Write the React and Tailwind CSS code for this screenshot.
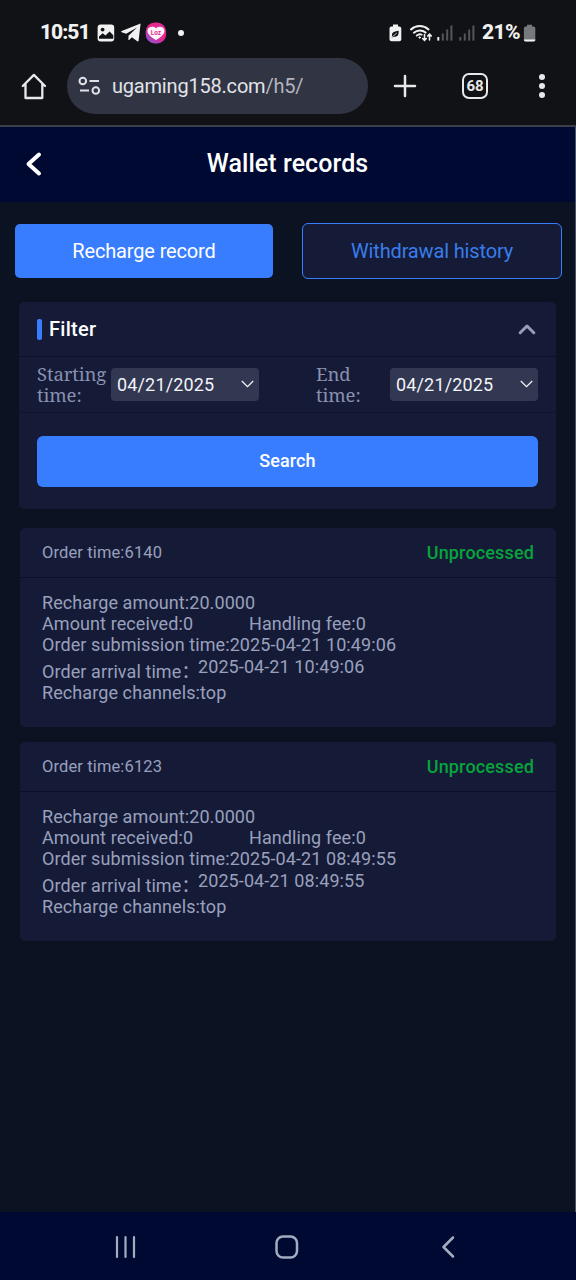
import React from "react";

const orders = [
  { id: "6140", time: "2025-04-21 10:49:06" },
  { id: "6123", time: "2025-04-21 08:49:55" },
];

function Signal({ first }) {
  return (
    <svg className="h-[16px] w-[16px]" viewBox="0 0 16 16">
      <rect x="0.3" y="12" width="2" height="3.6" fill={first ? "#eeeeee" : "#55565a"} />
      <rect x="4.8" y="8.5" width="2" height="7.1" fill="#55565a" />
      <rect x="9.2" y="4.5" width="2" height="11.1" fill="#55565a" />
      <rect x="13.4" y="0.5" width="2" height="15.1" fill="#55565a" />
    </svg>
  );
}

function StatusBar() {
  return (
    <div className="flex h-[58px] items-center pt-[7px] text-[#f1f1f1]">
      <span className="ml-[40px] w-[57px] whitespace-nowrap text-[21px] font-extrabold leading-none tracking-[-1px]">10:51</span>
      <svg className="h-[18px] w-[18px]" viewBox="0 0 18 18">
        <rect x="0.6" y="0.6" width="16.6" height="16.8" rx="3" fill="#f1f1f1" />
        <circle cx="5.6" cy="5.6" r="1.9" fill="#111216" />
        <path d="M2 14.8v-2.3l3.7-3.2 2.7 2.3 4.2-4 3.7 3.6v3.6z" fill="#111216" />
      </svg>
      <svg className="ml-[6px] h-[19px] w-[20px]" viewBox="0 0 20 19">
        <path d="M19.6.5 17.6 17.8c-.1.7-.8.9-1.3.5l-5.400-4-2.700 2.600c-.4.4-.8.2-.8-.4l.1-3.800L16 4.600 5.200 10.700.7 9.200c-.8-.3-.8-1 0-1.300z" fill="#f1f1f1" />
      </svg>
      <svg className="ml-[4px] h-[22px] w-[22px]" viewBox="0 0 22 22">
        <defs>
          <linearGradient id="badge" x1="1" y1="0" x2="0.2" y2="1">
            <stop offset="0" stopColor="#d52d9a" />
            <stop offset=".5" stopColor="#ec258a" />
            <stop offset="1" stopColor="#9152cf" />
          </linearGradient>
        </defs>
        <rect x=".7" y=".6" width="20.4" height="20.8" rx="9" fill="url(#badge)" />
        <path d="M11 17.9C6.5 15.5 2.500 12.100 2.500 8.900c0-4 5.500-5.400 8.500-2.500 3-2.900 8.500-1.500 8.500 2.500 0 3.200-4 6.600-8.500 9z" fill="#fff4fa" />
        <text x="11" y="13.100" textAnchor="middle" fontSize="6.400" fontWeight="700" fill="#dc2d91">Loz</text>
      </svg>
      <span className="ml-[11px] size-[6px] rounded-full bg-[#f1f1f1]" />
      <svg className="ml-[205px] h-[18px] w-[13px]" viewBox="0 0 13 18">
        <path d="M4 .5h5v2h1.3c1.2 0 2 .8 2 2v10.8c0 1.2-.8 2-2 2H2.5c-1.2 0-2-.8-2-2V4.500c0-1.200.8-2 2-2H4z" fill="#f1f1f1" />
        <path d="M9.600 6.800C5.500 7.300 3 8.500 3 11c0 .5.100.8.300 1.100L2.500 13.400l3-.7c3.500.3 4.400-2.500 4.100-5.900z" fill="#111216" />
        <path d="M3 13.200 7.800 9" stroke="#f1f1f1" strokeWidth=".8" />
      </svg>
      <svg className="ml-[8px] h-[18px] w-[23px]" viewBox="0 0 23 18" fill="none" stroke="#f1f1f1" strokeLinecap="round">
        <path d="M1 5.400a13 13 0 0 1 17.500 0" strokeWidth="2" />
        <path d="M3.900 8.700a9 9 0 0 1 11.700-.1" strokeWidth="2" />
        <path d="M6.700 11.600a5 5 0 0 1 5-1" strokeWidth="1.800" />
        <circle cx="9.700" cy="13.500" r=".8" fill="#f1f1f1" />
        <path d="M14.500 10.500v5.800m-1.800-1.800 1.800 1.900 1.800-1.900M19.500 16v-5.800m-1.800 1.800 1.800-1.900 1.800 1.900" strokeWidth="1.600" />
      </svg>
      <span className="ml-[4px] flex gap-[6px]">
        <Signal first />
        <Signal />
      </span>
      <span className="ml-[7px] w-[41px] whitespace-nowrap text-[21px] font-extrabold leading-none tracking-[-0.600px]">21%</span>
      <svg className="h-[18px] w-[13px]" viewBox="0 0 13 18">
        <path d="M4 .8h5v1.700h1.500c1 0 1.800.8 1.800 1.800v13H.9v-13c0-1 .8-1.800 1.800-1.800H4z" fill="#77787b" />
        <path d="M.9 15.600h11.400c0 1.100-.7 1.800-1.800 1.800H2.700c-1.100 0-1.800-.7-1.800-1.800z" fill="#f1f1f1" />
      </svg>
    </div>
  );
}

function BrowserBar() {
  return (
    <div className="flex h-[56px] items-center">
      <svg className="ml-[21px] h-[28px] w-[26px]" viewBox="0 0 26 28" fill="none" stroke="#e8e8ea" strokeWidth="2.300" strokeLinejoin="round" strokeLinecap="round">
        <path d="M1.800 14 12.900 2.900 24 14M4.500 12v14h16.800V12" />
      </svg>
      <div className="ml-[20px] flex h-[56px] w-[301px] items-center rounded-full bg-[#313543]">
        <svg className="ml-[11px] h-[20px] w-[24px]" viewBox="0 0 24 20" fill="none" stroke="#dfe1e8" strokeWidth="2">
          <circle cx="4.800" cy="5" r="3.300" />
          <path d="M11.500 5H21M2 14.500h9" />
          <circle cx="17.800" cy="14.500" r="3.300" />
        </svg>
        <span className="ml-[10px] whitespace-nowrap text-[20px] tracking-[-0.200px] text-[#e2e3e9]">
          ugaming158.com<span className="text-[#b1b4bf]">/h5/</span>
        </span>
      </div>
      <svg className="ml-[25px] size-[24px]" viewBox="0 0 24 24" stroke="#e8e8ea" strokeWidth="2.500" strokeLinecap="round">
        <path d="M12 2v20M2 12h20" />
      </svg>
      <div className="ml-[45px] flex h-[26px] w-[26px] items-center justify-center rounded-[7px] border-[2.500px] border-[#e8e8ea] text-[15px] font-bold leading-none text-[#e8e8ea]">68</div>
      <div className="ml-[51px] flex flex-col gap-[3px]">
        <span className="size-[6px] rounded-full bg-[#e8e8ea]" />
        <span className="size-[6px] rounded-full bg-[#e8e8ea]" />
        <span className="size-[6px] rounded-full bg-[#e8e8ea]" />
      </div>
    </div>
  );
}

function DateField({ label }) {
  return (
    <div className="flex items-center">
      <div className="w-[74px] font-['Noto_Serif','DejaVu_Serif_Condensed','DejaVu_Serif',serif] text-[18.500px] leading-[21px] tracking-[-0.100px] text-[#8990b0]">
        {label}
        <br />
        time:
      </div>
      <div className="flex h-[33px] w-[148px] items-center justify-between rounded-[4px] bg-[#323752] pl-[6px] pr-[5px] text-[18px] tracking-[0.150px] text-[#f2f3f8]">
        <span>04/21/2025</span>
        <svg className="h-[8px] w-[13px]" viewBox="0 0 13 8" fill="none" stroke="#f2f3f8" strokeWidth="1.300">
          <path d="m.8 1 5.700 5.700L12.200 1" />
        </svg>
      </div>
    </div>
  );
}

function FilterPanel() {
  return (
    <section className="ml-[19px] mt-[22px] h-[207px] w-[537px] rounded-[5px] bg-[#151b37]">
      <div className="flex h-[55px] items-center border-b border-[#0c122d] pl-[18px] pr-[20px]">
        <span className="h-[21px] w-[5px] rounded-[2px] bg-[#397dff]" />
        <h2 className="ml-[7px] text-[20px] font-medium leading-none tracking-[0.300px] text-white">Filter</h2>
        <svg className="ml-auto h-[11px] w-[18px]" viewBox="0 0 18 11" fill="none" stroke="#979db9" strokeWidth="3" strokeLinecap="round" strokeLinejoin="round">
          <path d="M2.200 8.800 9 2l6.800 6.800" />
        </svg>
      </div>
      <div className="flex h-[56px] items-center border-b border-[#0e1430] pb-px pl-[18px]">
        <DateField label="Starting" />
        <div className="ml-[57px]">
          <DateField label="End" />
        </div>
      </div>
      <button className="ml-[18px] mt-[23px] block h-[51px] w-[501px] rounded-[6px] bg-[#397dff] pb-[2px] text-[18px] font-medium tracking-[0.100px] text-white">Search</button>
    </section>
  );
}

function OrderCard({ order }) {
  return (
    <article className="ml-[20px] h-[199px] w-[536px] rounded-[5px] bg-[#151b37] text-[#99a0bd]">
      <div className="flex h-[50px] items-center justify-between border-b border-[#0a102b] pl-[22px] pr-[22px]">
        <span className="pt-[2px] text-[16.500px] tracking-[0.120px]">Order time:{order.id}</span>
        <span className="text-[18px] font-medium tracking-[0.150px] text-[#07a43c]">Unprocessed</span>
      </div>
      <div className="pl-[22px] pt-[13.500px] text-[18px] leading-[21.400px] tracking-[0.090px]">
        <p>Recharge amount:20.0000</p>
        <div className="flex">
          <span className="w-[207px]">Amount received:0</span>
          <span>Handling fee:0</span>
        </div>
        <p>Order submission time:{order.time}</p>
        <div className="flex h-[26.500px] items-start">
          <span className="w-[156px] whitespace-nowrap pt-[5px] font-[Roboto,'Noto_Sans_CJK_SC',sans-serif]">Order arrival time：</span>
          <span>{order.time}</span>
        </div>
        <p>Recharge channels:top</p>
      </div>
    </article>
  );
}

export default function App() {
  return (
    <div className="flex h-[1280px] w-[576px] flex-col overflow-hidden bg-[#111216] font-[Roboto,'Noto_Sans_CJK_SC',sans-serif]">
      <StatusBar />
      <BrowserBar />
      <div className="mt-[11px] h-[2px] shrink-0 bg-[#3a3e4b]" />
      <div className="flex h-[1085px] shrink-0 flex-col border-r border-[#4c5263] bg-[#0b1222]">
        <header className="flex h-[75px] shrink-0 items-center bg-[#000932] pb-[2px]">
          <svg className="ml-[25px] h-[26px] w-[18px]" viewBox="0 0 18 26" fill="none" stroke="#fff" strokeWidth="4" strokeLinecap="round" strokeLinejoin="round">
            <path d="M14 3.500 3.500 13 14 22.500" />
          </svg>
          <h1 className="ml-[43px] w-[403px] text-center text-[25px] font-medium leading-none tracking-[0.070px] text-white">Wallet records</h1>
        </header>
        <div className="ml-[15px] mt-[21px] flex h-[57px] shrink-0 items-center pb-px">
          <button className="h-[54px] w-[258px] rounded-[5px] bg-[#397dff] text-[20px] tracking-[-0.150px] text-white">Recharge record</button>
          <button className="ml-[29px] h-[56px] w-[260px] rounded-[6px] border border-[#397dff] bg-[#151b37] text-[20px] tracking-[-0.150px] text-[#397deb]">Withdrawal history</button>
        </div>
        <FilterPanel />
        <div className="mt-[19px] flex flex-col gap-[15px]">
          {orders.map((o) => (
            <OrderCard key={o.id} order={o} />
          ))}
        </div>
      </div>
      <nav className="flex h-[68px] shrink-0 items-center bg-[#000932] pt-[2px]">
        <svg className="ml-[114px] h-[24px] w-[23px]" viewBox="0 0 23 24" stroke="#a5abc0" strokeWidth="2.200" strokeLinecap="round">
          <path d="M3 2v20M11.500 2v20M20 2v20" />
        </svg>
        <svg className="ml-[137px] size-[26px]" viewBox="0 0 26 26" fill="none" stroke="#a5abc0" strokeWidth="2.500">
          <rect x="2.500" y="2.500" width="20.500" height="21" rx="6.500" />
        </svg>
        <svg className="ml-[140px] h-[24px] w-[16px]" viewBox="0 0 16 24" fill="none" stroke="#a5abc0" strokeWidth="2.500" strokeLinecap="round" strokeLinejoin="round">
          <path d="M13 2.500 3.500 12l9.500 9.500" />
        </svg>
      </nav>
    </div>
  );
}
